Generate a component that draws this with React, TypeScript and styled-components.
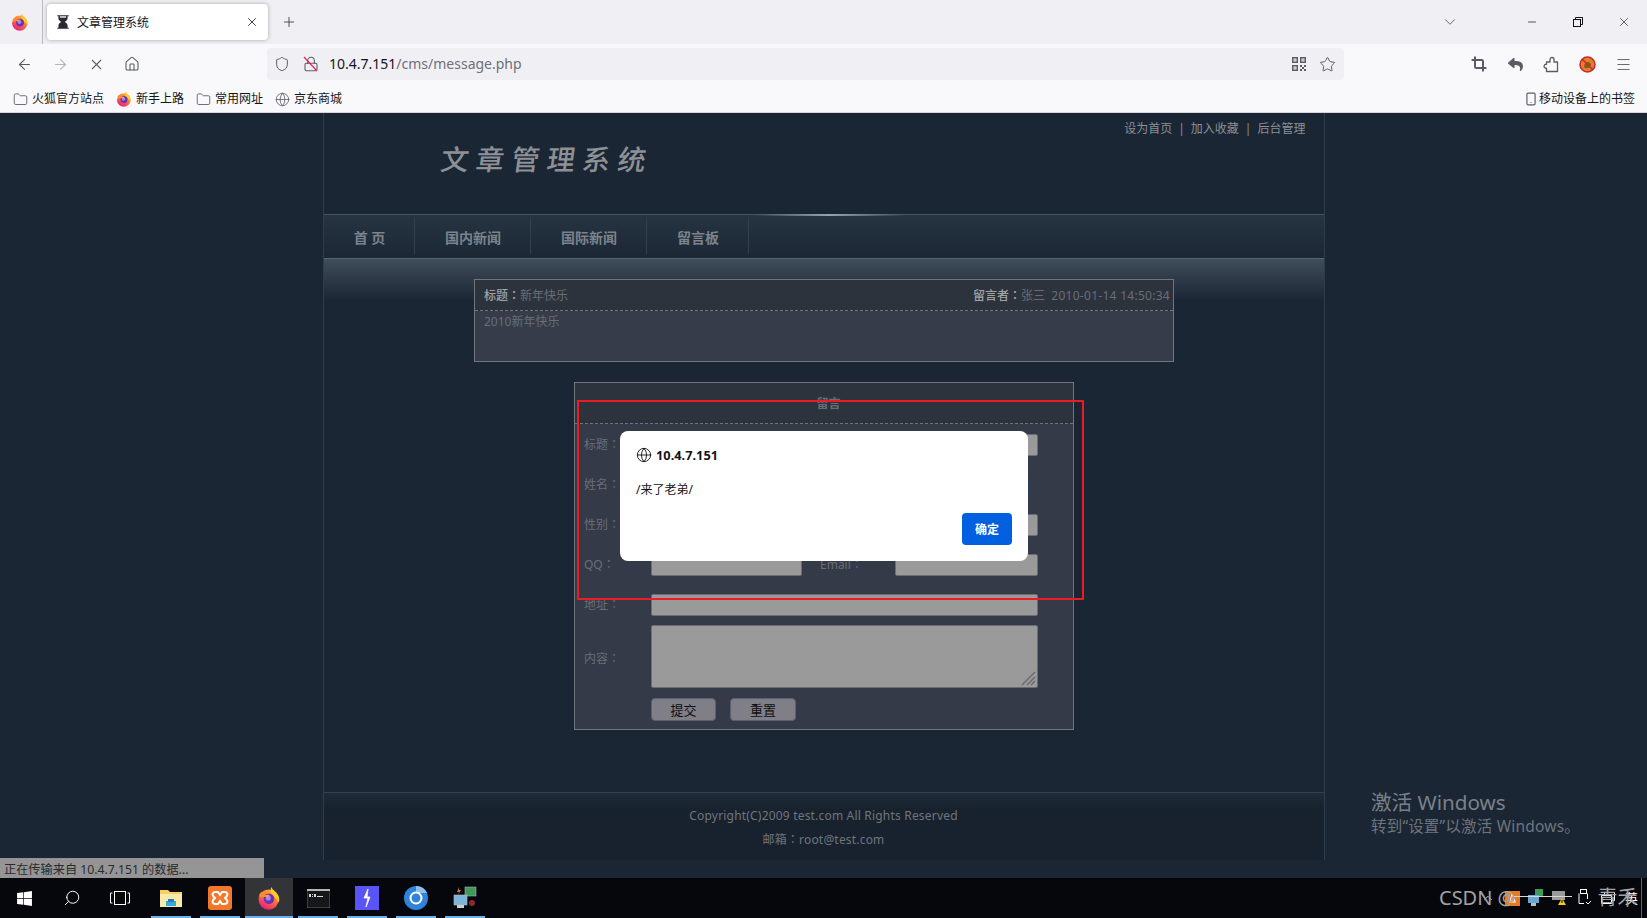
import React from 'react';
import styled, { createGlobalStyle } from 'styled-components';
import { ArrowLeft, ArrowRight, X, House, Shield, Lock, Star, Crop, Folder, Globe, Smartphone, Minus, Plus, ChevronDown, Search, ChevronUp, Menu } from 'lucide-react';
import { FaWindows, FaReply } from 'react-icons/fa';

const SANS = `"Noto Sans", "Noto Sans CJK SC", sans-serif`;

const Global = createGlobalStyle`
  html, body { margin: 0; padding: 0; background: #1a2634; }
  body { font-family: ${SANS}; overflow: hidden; }
  * { box-sizing: border-box; }
`;

const Screen = styled.div`
  position: relative; width: 1647px; height: 918px; overflow: hidden;
  display: flex; flex-direction: column; font-size: 12px;
`;

/* ---------- browser chrome ---------- */
const TabStrip = styled.div`
  height: 44px; background: #f0f0f4; display: flex; align-items: center; color: #2b2a33;
`;
const AppButton = styled.div`
  width: 43px; height: 44px; display: flex; align-items: center; justify-content: center;
  padding-right: 3px; border-right: 1px solid #b9b9bf;
`;
const Tab = styled.div`
  width: 221px; height: 36px; margin-left: 4px; background: #fff; border-radius: 4px;
  box-shadow: 0 0 4px rgba(0,0,0,.3); display: flex; align-items: center; padding: 0 9px 0 8px;
  font-size: 12px; color: #15141a;
`;
const TabTitle = styled.span` margin-left: 6px; flex: 1; `;
const NewTab = styled.div` margin-left: 13px; display: flex; `;
const WindowControls = styled.div`
  margin-left: auto; display: flex; align-items: center; height: 44px;
`;
const WinButton = styled.div<{ $w: number; $gap?: number }>`
  width: ${p => p.$w}px; margin-right: ${p => p.$gap ?? 0}px; display: flex; justify-content: center; align-items: center;
`;
const NavBar = styled.div`
  height: 40px; background: #f9f9fb; display: flex; align-items: center; padding-left: 6px;
`;
const Slot = styled.div<{ $w?: number }>`
  width: ${p => p.$w ?? 36}px; height: 32px; display: flex; align-items: center; justify-content: center;
  color: #5b5b66; flex: none;
`;
const UrlBar = styled.div`
  margin-left: 117px; margin-right: 117px; width: 1077px; height: 32px; background: #f0f0f4; border-radius: 4px;
  display: flex; align-items: center; padding: 0 8px 0 7px; color: #5b5b66; flex: none;
`;
const LockWrap = styled.div`
  position: relative; margin-left: 13px; width: 16px; height: 16px; display: flex;
`;
const LockStrike = styled.svg` position: absolute; left: 0; top: 0; `;
const Url = styled.div`
  margin-left: 10px; font-size: 14px; color: #15141a; padding-bottom: 1px;
  span { color: #6f6f78; }
`;
const UrlRight = styled.div` margin-left: auto; display: flex; align-items: center; gap: 13px; `;
const BookmarkBar = styled.div`
  height: 29px; background: #f9f9fb; display: flex; align-items: center; padding: 2px 12px 0 13px;
  border-bottom: 1px solid #d6d6da; color: #15141a; font-size: 12px; line-height: 16px;
`;
const Bookmark = styled.div`
  display: flex; align-items: center; gap: 4px; margin-right: 12px; color: #15141a;
  svg { flex: none; color: #5b5b66; }
`;
const BookmarkRight = styled(Bookmark)` margin-left: auto; margin-right: 0; gap: 1px; `;

/* ---------- page ---------- */
const Page = styled.div`
  flex: 1; background: #1a2634; display: flex; flex-direction: column; align-items: center; min-height: 0;
`;
const Wrap = styled.div`
  width: 1002px; height: 747px; border-left: 1px solid #2e3c4b; border-right: 1px solid #2e3c4b;
  display: flex; flex-direction: column;
`;
const Header = styled.div`
  height: 101px; display: flex; align-items: flex-start; padding: 0 18px 0 117px;
`;
const Logo = styled.div`
  margin-top: 26px; font-size: 28px; line-height: 40px; letter-spacing: 7.4px; color: #8d9095; font-weight: 500;
  transform: skewX(-8deg);
`;
const TopLinks = styled.div`
  margin-left: auto; margin-top: 7px; color: #8c9097; font-size: 12px; line-height: 18px; display: flex; gap: 6px;
`;
const NavStrip = styled.div`
  height: 45px; display: flex; border-top: 1px solid #465666; border-bottom: 1px solid #4f6670;
  background: linear-gradient(#263441, #1b2735);
  position: relative;
  &::before {
    content: ''; position: absolute; left: 430px; top: -1px; width: 150px; height: 2px;
    background: linear-gradient(90deg, transparent, #98a3ad, transparent);
  }
`;
const NavItem = styled.div<{ $w: number }>`
  width: ${p => p.$w}px; display: flex; align-items: center; justify-content: center; padding: 3px 0 0 2px;
  border-right: 1px solid #314050; margin: 2px 0 4px; font-weight: 700; font-size: 14px; color: #7b838c;
`;
const Main = styled.div`
  flex: 1; padding-top: 20px; display: flex; flex-direction: column; align-items: center;
  background: linear-gradient(#3f4c5a 0, #1a2634 42px);
`;
const Colon = styled.span` font-family: "Noto Sans CJK TC", sans-serif; `;
const MessageCard = styled.div`
  width: 700px; height: 83px; border: 1px solid #70767e; background: #363c49; flex: none; margin-left: 1px;
`;
const MessageHead = styled.div`
  height: 31px; background: #2d333d; border-bottom: 1px dashed #6f757d; display: flex; align-items: center;
  justify-content: space-between; padding: 0 3px 0 9px; color: #686e77; font-size: 12px;
  b { color: #a0a4a8; font-weight: 500; }
`;
const DateText = styled.span` letter-spacing: .28px; `;
const MessageBody = styled.div` padding: 2px 9px; line-height: 18px; color: #686e77; `;
const FormCard = styled.div`
  margin-top: 20px; width: 500px; height: 348px; border: 1px solid #70767e; background: #343a47; flex: none; margin-left: 1px;
`;
const FormHead = styled.div`
  height: 41px; background: #2d333d; border-bottom: 1px dashed #6f757d; text-align: center; padding: 12px 0 0 9px;
  color: #686e77; font-weight: 700; line-height: 17px; font-size: 12px;
`;
const FormBody = styled.div`
  padding: 10px 0 0 9px; display: flex; flex-direction: column;
`;
const Row = styled.div<{ $mb?: number }>`
  display: flex; align-items: center; margin-bottom: ${p => p.$mb ?? 18}px;
`;
const Label = styled.label<{ $w?: number }>`
  width: ${p => p.$w ?? 67}px; color: #686e77; font-size: 12px; flex: none; padding-bottom: 2px;
`;
const EmailLabel = styled(Label)` padding-left: 18px; `;
const AreaLabel = styled(Label)` padding: 2px 0 0; `;
const Field = styled.input<{ $w: number; $dark?: boolean; $ml?: number }>`
  width: ${p => p.$w}px; height: 22px; padding: 0; flex: none; outline: none; margin-left: ${p => p.$ml ?? 0}px;
  background: ${p => (p.$dark ? '#2e3c4b' : '#9a9a9b')};
  border: 1px solid ${p => (p.$dark ? '#2e3c4b' : '#6a6c76')}; border-radius: 2px;
`;
const AreaWrap = styled.div` position: relative; width: 387px; height: 63px; flex: none; `;
const Area = styled.textarea`
  display: block; width: 100%; height: 100%; resize: none; background: #9a9a9b; outline: none;
  border: 1px solid #6a6c76; border-radius: 2px; padding: 0;
`;
const Grip = styled.svg` position: absolute; right: 2px; bottom: 2px; `;
const FormButton = styled.button<{ $w: number }>`
  width: ${p => p.$w}px; height: 23px; background: #807f87; border: 1px solid #5e606b; border-radius: 4px;
  color: #0e0e10; font-family: ${SANS}; font-size: 13px; padding: 0; margin-right: 14px; line-height: 20px;
`;
const Footer = styled.div`
  height: 68px; flex: none; border-top: 1px solid #33414f; text-align: center; color: #6f757d; font-size: 12px; line-height: 23px;
  letter-spacing: .19px; padding: 11px 0 0; background: linear-gradient(#1d2a39, #18222e 16px);
`;

/* ---------- overlays ---------- */
const Dialog = styled.div`
  position: absolute; left: 620px; top: 431px; width: 408px; height: 130px; background: #fff; border-radius: 8px;
  padding: 15px 16px 16px; color: #15141a;
`;
const DialogHost = styled.div`
  display: flex; align-items: center; gap: 4px; font-weight: 700; font-size: 12.8px; line-height: 18px;
`;
const DialogText = styled.div` margin-top: 17px; font-size: 12px; line-height: 18px; `;
const DialogAction = styled.div` display: flex; justify-content: flex-end; margin-top: 14px; `;
const DialogButton = styled.button`
  width: 50px; height: 32px; background: #0060df; color: #fff; border: 0; border-radius: 4px; padding: 0;
  font-family: ${SANS}; font-size: 12px; font-weight: 700;
`;
const RedMark = styled.div`
  position: absolute; left: 577px; top: 400px; width: 507px; height: 200px; border: 2px solid #ed1c24;
`;
const Status = styled.div`
  position: absolute; left: 0; top: 858px; width: 264px; height: 20px; background: #959596; color: #2a2a2c;
  font-size: 12.2px; line-height: 23px; padding-left: 4px; white-space: nowrap;
`;
const Activate = styled.div`
  position: absolute; left: 1371px; top: 787px; color: #7b8188;
`;
const ActivateTitle = styled.div` font-size: 20.6px; line-height: 30px; `;
const ActivateSub = styled.div` font-size: 15.5px; line-height: 20px; margin-top: -1px; color: #6e747c; letter-spacing: .2px; `;

/* ---------- taskbar ---------- */
const Taskbar = styled.div`
  height: 40px; flex: none; background: #05070c; display: flex; align-items: center; position: relative; color: #fff;
`;
const TaskSlot = styled.div<{ $w: number }>`
  width: ${p => p.$w}px; height: 40px; display: flex; align-items: center; justify-content: center; flex: none;
`;
const PinSlot = styled.div<{ $active?: boolean }>`
  width: 48px; height: 40px; margin-right: 1px; display: flex; align-items: center; justify-content: center; flex: none;
  position: relative; background: ${p => (p.$active ? '#333438' : 'transparent')};
  &::after { content: ''; position: absolute; left: ${p => (p.$active ? 0 : '4px')}; right: ${p => (p.$active ? 0 : '4px')}; bottom: 0; height: 2px; background: #6cb2ea; }
`;
const Tray = styled.div`
  margin-left: auto; display: flex; align-items: center; height: 40px; padding-right: 5px; position: relative;
`;
const TrayIcon = styled.div<{ $w: number }>`
  width: ${p => p.$w}px; display: flex; justify-content: center; align-items: center; flex: none;
`;
const TrayLang = styled.div`
  width: 20px; margin-left: 2px; text-align: center; font-size: 13px; color: #fff; border-right: 1px solid #666; height: 40px; line-height: 40px;
`;
const Watermark = styled.div`
  position: absolute; left: 1439px; top: 8px; font-size: 20px; line-height: 24px; color: #a3a3a3; white-space: nowrap; display: flex;
`;
const WatermarkName = styled.span` margin-left: 82px; `;
const WatermarkStroke = styled.div`
  position: absolute; left: 1514px; top: 18px; width: 58px; height: 1px; background: #d8d8d8;
`;

/* ---------- drawings ---------- */
const FirefoxLogo = ({ size = 16 }: { size?: number }) => (
  <svg width={size} height={size} viewBox="0 0 32 32">
    <defs>
      <linearGradient id="ffa" x1="0.8" y1="0" x2="0.2" y2="1">
        <stop offset="0" stopColor="#ffbd2e" />
        <stop offset=".45" stopColor="#ff7139" />
        <stop offset="1" stopColor="#e31587" />
      </linearGradient>
    </defs>
    <circle cx="15.5" cy="18" r="13.5" fill="url(#ffa)" />
    <path d="M19 1c1 4 6 6 9 11 2 4 2 7 1 10-3-6-7-8-10-11-1-3-1-7 0-10z" fill="#ffca28" />
    <path d="M3 11c3-3 6-4 9-4-2 2-3 4-2 6l-5 3z" fill="#ff8a30" />
    <circle cx="16" cy="17" r="7" fill="#6a33b5" />
    <circle cx="15" cy="16" r="3.4" fill="#a985e8" />
    <path d="M8 14c2-2 6-3 9-2l-3 3z" fill="#ff9a3c" />
  </svg>
);
const Hourglass = () => (
  <svg width="16" height="16" viewBox="0 0 14 14">
    <path d="M2 1h10v1h-1v2c0 1.6-1.6 2.3-2.4 3C9.400 7.700 11 8.400 11 10v2h1v1H2v-1h1v-2c0-1.600 1.600-2.300 2.400-3C4.600 6.300 3 5.600 3 4V2H2z" fill="#2b2a33" />
    <path d="M4.300 2h5.400v1.200H4.300z" fill="#fff" />
  </svg>
);
const RestoreIcon = () => (
  <svg width="10" height="10" viewBox="0 0 10 10" fill="none" stroke="#111" strokeWidth="1">
    <rect x=".5" y="2.500" width="7" height="7" />
    <path d="M2.500 2.500V.5h7v7H7.500" />
  </svg>
);
const QrIcon = () => (
  <svg width="14" height="14" viewBox="0 0 14 14" fill="#5b5b66">
    <path d="M0 0h6v6H0zm1.500 1.500v3h3v-3zM8 0h6v6H8zm1.500 1.500v3h3v-3zM0 8h6v6H0zm1.500 1.500v3h3v-3z" fillRule="evenodd" />
    <path d="M2.500 2.500h1v1h-1zM10.500 2.500h1v1h-1zM2.500 10.500h1v1h-1zM8 8h2v2H8zM12 8h2v2h-2zM10 10h2v2h-2zM8 12h2v2H8zM12 12h2v2h-2z" />
  </svg>
);
const PuzzlePiece = () => (
  <svg width="16" height="17" viewBox="0 0 16 17" fill="none" stroke="#5b5b66" strokeWidth="1.300" strokeLinejoin="round">
    <path d="M7 3.500a2 2 0 0 1 4 0V6h3.500v9.500H3.500v-3.300a2 2 0 1 1 0-3.900V6H7z" />
  </svg>
);
const BlockedExt = () => (
  <svg width="17" height="17" viewBox="0 0 17 17">
    <circle cx="8.500" cy="8.500" r="7.500" fill="#d8842a" stroke="#d2252a" strokeWidth="1.500" />
    <path d="M5 11c0-3 2-5 5-5l2 2c0 3-3 5-6 4z" fill="#8a5a20" />
    <path d="M3.200 3.200l10.600 10.600" stroke="#d2252a" strokeWidth="1.500" />
  </svg>
);
const Explorer = () => (
  <svg width="22" height="20" viewBox="0 0 22 20">
    <path d="M0 2h8l2 2h12v15H0z" fill="#f4cf68" />
    <path d="M0 6h22v13H0z" fill="#fbe9a8" />
    <path d="M6 13h10v5H6z" fill="#36a9e1" />
    <path d="M8 11h6v3H8z" fill="#1f7fc0" />
  </svg>
);
const Xampp = () => (
  <svg width="24" height="24" viewBox="0 0 24 24">
    <rect width="24" height="24" rx="3" fill="#f1772a" />
    <path d="M7 6h3l2 3 2-3h3c2 0 3 2 2 4l-2 2 2 2c1 2 0 4-2 4h-3l-2-3-2 3H7c-2 0-3-2-2-4l2-2-2-2C4 8 5 6 7 6z" fill="none" stroke="#fff" strokeWidth="2" />
  </svg>
);
const Terminal = () => (
  <svg width="23" height="19" viewBox="0 0 23 19">
    <rect width="23" height="19" fill="#17171a" stroke="#9a9a9a" strokeWidth=".6" />
    <rect width="23" height="2" fill="#b5b5b5" />
    <path d="M2 5h2v3H2zM5 5h1v1H5zM5 7h1v1H5zM7 5h2v3H7zM10 7h6v1h-6z" fill="#d8d8d8" />
  </svg>
);
const Bolt = () => (
  <svg width="24" height="24" viewBox="0 0 24 24">
    <rect width="24" height="24" fill="#5a54f6" />
    <path d="M13 3l-4 9h4l-2 9 4-10h-3z" fill="#fff" stroke="#fff" strokeWidth=".8" />
  </svg>
);
const ChromeLike = () => (
  <svg width="24" height="24" viewBox="0 0 24 24">
    <circle cx="12" cy="12" r="12" fill="#2f83db" />
    <path d="M12 0a12 12 0 0 1 11 7H12z" fill="#8cc0f0" />
    <circle cx="12" cy="12" r="5.500" fill="#2f83db" stroke="#fff" strokeWidth="2" />
  </svg>
);
const Network = () => (
  <svg width="24" height="24" viewBox="0 0 24 24">
    <rect x="12" y="1" width="11" height="9" fill="#3f9a5a" stroke="#aaa" strokeWidth=".6" />
    <rect x="1" y="9" width="13" height="10" fill="#7cb5dc" stroke="#bbb" strokeWidth=".6" />
    <path d="M4 19h7v3H4z" fill="#ccc" />
    <path d="M6 1L4 6h2l-1 3 3-5H6z" fill="#c9772b" />
    <circle cx="19" cy="17" r="3" fill="#8a2b2b" />
  </svg>
);
const TaskView = () => (
  <svg width="20" height="14" viewBox="0 0 20 14" fill="none" stroke="#fff" strokeWidth="1">
    <rect x="4.500" y=".5" width="11" height="13" />
    <path d="M2.500 2H.5v10h2M17.500 2h2v10h-2" />
  </svg>
);
const TrayOrange = () => (
  <svg width="15" height="15" viewBox="0 0 15 15">
    <rect width="15" height="15" fill="#ea7a20" />
    <path d="M4 11h7M7 3l3 7H5z" fill="none" stroke="#fff" />
  </svg>
);
const TrayNet = () => (
  <svg width="16" height="18" viewBox="0 0 16 18">
    <rect x="7" y="0" width="8" height="7" fill="#3f9a5a" />
    <rect x="0" y="6" width="11" height="8" fill="#6aa6d6" />
    <path d="M3 14h5v3H3z" fill="#bbb" />
  </svg>
);
const TrayVm = () => (
  <svg width="16" height="16" viewBox="0 0 16 16">
    <rect y="1" width="13" height="9" fill="#9a9a9a" />
    <path d="M10 8l4 7H6z" fill="#f3c52f" />
    <path d="M10 10v3" stroke="#111" />
  </svg>
);
const TrayUsb = () => (
  <svg width="14" height="18" viewBox="0 0 14 18" fill="none" stroke="#fff" strokeWidth="1">
    <rect x="3.500" y=".5" width="6" height="4" />
    <path d="M2 4.500v10h5M9 13l2 2 3-3M10.500 4.500V10" />
  </svg>
);
const TrayScreen = () => (
  <svg width="14" height="12" viewBox="0 0 14 12" fill="none" stroke="#fff" strokeWidth="1">
    <path d="M3.500 3V.5h10v8H11M.5 3.500h10v8H.5z" />
  </svg>
);

export default function App() {
  return (
    <Screen>
      <Global />
      <TabStrip>
        <AppButton><FirefoxLogo size={18} /></AppButton>
        <Tab>
          <Hourglass />
          <TabTitle>文章管理系统</TabTitle>
          <X size={14} strokeWidth={1.4} />
        </Tab>
        <NewTab><Plus size={16} strokeWidth={1.3} color="#3a3a42" /></NewTab>
        <WindowControls>
          <WinButton $w={24} $gap={47}><ChevronDown size={18} strokeWidth={1.2} color="#5b5b66" /></WinButton>
          <WinButton $w={46}><Minus size={12} strokeWidth={1.4} color="#111" /></WinButton>
          <WinButton $w={46}><RestoreIcon /></WinButton>
          <WinButton $w={46}><X size={14} strokeWidth={1.1} color="#111" /></WinButton>
        </WindowControls>
      </TabStrip>
      <NavBar>
        <Slot><ArrowLeft size={17} strokeWidth={1.5} /></Slot>
        <Slot><ArrowRight size={17} strokeWidth={1.5} color="#b4b4ba" /></Slot>
        <Slot><X size={17} strokeWidth={1.5} /></Slot>
        <Slot><House size={16} strokeWidth={1.6} /></Slot>
        <UrlBar>
          <Shield size={16} strokeWidth={1.5} />
          <LockWrap>
            <Lock size={16} strokeWidth={1.6} />
            <LockStrike width="16" height="16" viewBox="0 0 16 16">
              <path d="M1 1l13 14" stroke="#e22850" strokeWidth="1.200" />
            </LockStrike>
          </LockWrap>
          <Url>10.4.7.151<span>/cms/message.php</span></Url>
          <UrlRight>
            <QrIcon />
            <Star size={17} strokeWidth={1.4} />
          </UrlRight>
        </UrlBar>
        <Slot><Crop size={16} strokeWidth={3} /></Slot>
        <Slot><FaReply size={15} /></Slot>
        <Slot><PuzzlePiece /></Slot>
        <Slot><BlockedExt /></Slot>
        <Slot><Menu size={17} strokeWidth={1.3} /></Slot>
      </NavBar>
      <BookmarkBar>
        <Bookmark><Folder size={15} strokeWidth={1.4} />火狐官方站点</Bookmark>
        <Bookmark><FirefoxLogo size={16} />新手上路</Bookmark>
        <Bookmark><Folder size={15} strokeWidth={1.4} />常用网址</Bookmark>
        <Bookmark><Globe size={15} strokeWidth={1.3} />京东商城</Bookmark>
        <BookmarkRight><Smartphone size={14} strokeWidth={2} />移动设备上的书签</BookmarkRight>
      </BookmarkBar>
      <Page>
        <Wrap>
          <Header>
            <Logo>文章管理系统</Logo>
            <TopLinks>
              <span>设为首页</span><span>|</span><span>加入收藏</span><span>|</span><span>后台管理</span>
            </TopLinks>
          </Header>
          <NavStrip>
            <NavItem $w={91}>首 页</NavItem>
            <NavItem $w={116}>国内新闻</NavItem>
            <NavItem $w={116}>国际新闻</NavItem>
            <NavItem $w={102}>留言板</NavItem>
          </NavStrip>
          <Main>
            <MessageCard>
              <MessageHead>
                <span><b>标题<Colon>：</Colon></b>新年快乐</span>
                <span><b>留言者<Colon>：</Colon></b>张三&nbsp;&nbsp;<DateText>2010-01-14 14:50:34</DateText></span>
              </MessageHead>
              <MessageBody>2010新年快乐</MessageBody>
            </MessageCard>
            <FormCard>
              <FormHead>留言</FormHead>
              <FormBody>
                <Row><Label>标题<Colon>：</Colon></Label><Field $w={387} /></Row>
                <Row><Label>姓名<Colon>：</Colon></Label><Field $w={380} $dark /></Row>
                <Row><Label>性别<Colon>：</Colon></Label><Field $w={387} /></Row>
                <Row>
                  <Label>QQ<Colon>：</Colon></Label><Field $w={151} />
                  <EmailLabel $w={75}>Email<Colon>：</Colon></EmailLabel>
                  <Field $w={143} $ml={18} />
                </Row>
                <Row $mb={9}><Label>地址<Colon>：</Colon></Label><Field $w={387} /></Row>
                <Row $mb={10}>
                  <AreaLabel>内容<Colon>：</Colon></AreaLabel>
                  <AreaWrap>
                    <Area />
                    <Grip width="15" height="15" viewBox="0 0 15 15" stroke="#66666e" strokeWidth="1.200">
                      <path d="M1 14L14 1M6 14l8-8M10 14l4-4" />
                    </Grip>
                  </AreaWrap>
                </Row>
                <Row $mb={0}>
                  <Label />
                  <FormButton $w={65}>提交</FormButton>
                  <FormButton $w={66}>重置</FormButton>
                </Row>
              </FormBody>
            </FormCard>
          </Main>
          <Footer>
            <div>Copyright(C)2009 test.com All Rights Reserved</div>
            <div>邮箱<Colon>：</Colon>root@test.com</div>
          </Footer>
        </Wrap>
      </Page>
      <Taskbar>
        <TaskSlot $w={48}><FaWindows size={17} /></TaskSlot>
        <TaskSlot $w={48}><Search size={18} strokeWidth={1.3} style={{ transform: 'scaleX(-1)' }} /></TaskSlot>
        <TaskSlot $w={48}><TaskView /></TaskSlot>
        <TaskSlot $w={3} />
        <PinSlot><Explorer /></PinSlot>
        <PinSlot><Xampp /></PinSlot>
        <PinSlot $active><FirefoxLogo size={24} /></PinSlot>
        <PinSlot><Terminal /></PinSlot>
        <PinSlot><Bolt /></PinSlot>
        <PinSlot><ChromeLike /></PinSlot>
        <PinSlot><Network /></PinSlot>
        <Tray>
          <TrayIcon $w={24}><ChevronUp size={14} strokeWidth={1.2} /></TrayIcon>
          <TrayIcon $w={24}><TrayOrange /></TrayIcon>
          <TrayIcon $w={24}><TrayNet /></TrayIcon>
          <TrayIcon $w={24}><TrayVm /></TrayIcon>
          <TrayIcon $w={24}><TrayUsb /></TrayIcon>
          <TrayIcon $w={24}><TrayScreen /></TrayIcon>
          <TrayLang>英</TrayLang>
        </Tray>
        <Watermark>CSDN @<WatermarkName>青禾</WatermarkName></Watermark>
        <WatermarkStroke />
      </Taskbar>
      <Dialog>
        <DialogHost><Globe size={16} strokeWidth={1.4} />10.4.7.151</DialogHost>
        <DialogText>/来了老弟/</DialogText>
        <DialogAction><DialogButton>确定</DialogButton></DialogAction>
      </Dialog>
      <RedMark />
      <Status>正在传输来自 10.4.7.151 的数据...</Status>
      <Activate>
        <ActivateTitle>激活 Windows</ActivateTitle>
        <ActivateSub>转到“设置”以激活 Windows。</ActivateSub>
      </Activate>
    </Screen>
  );
}
